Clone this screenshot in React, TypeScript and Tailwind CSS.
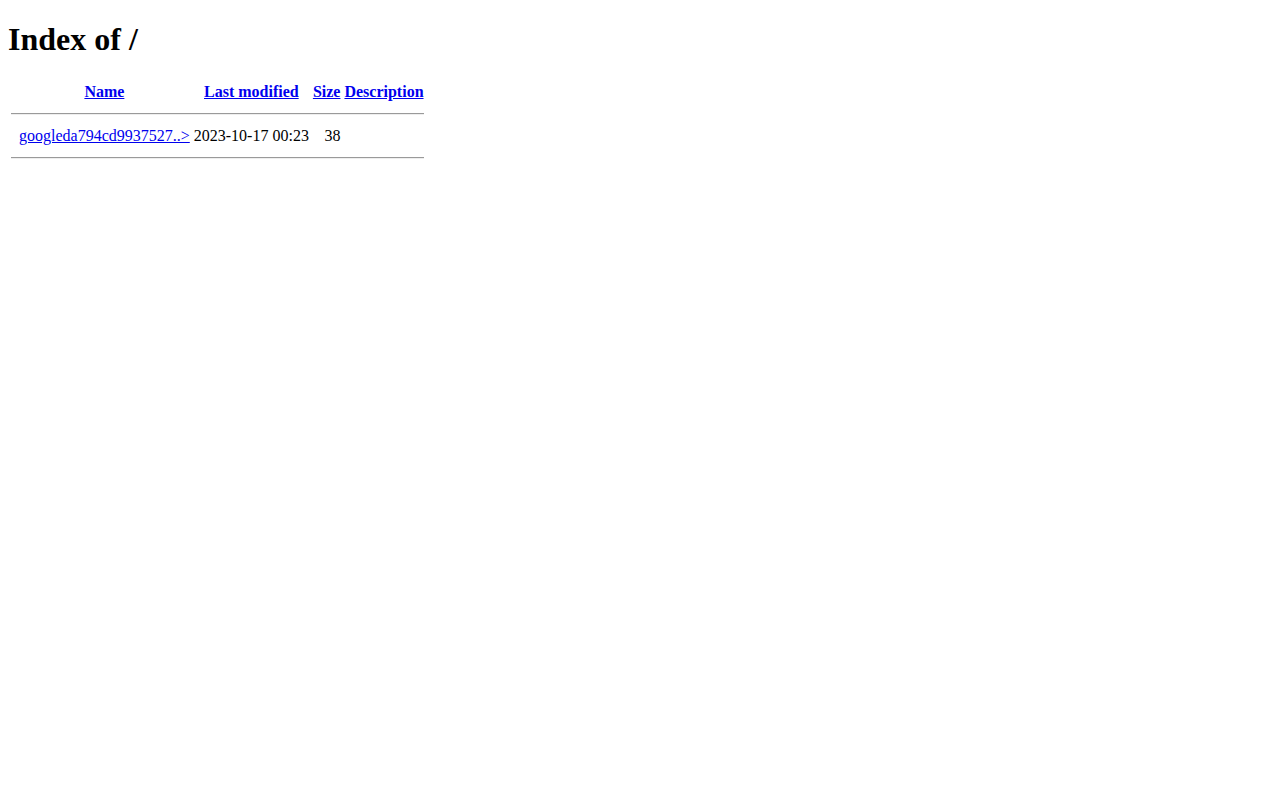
export default function App() {
  const serif = { fontFamily: '"Liberation Serif", "Times New Roman", serif' };
  const hr = (
    <tr>
      <th colSpan={5} className="p-px">
        <hr className="my-2 h-0 border-0 border-t border-b border-t-[#9a9a9a] border-b-[#eeeeee]" />
      </th>
    </tr>
  );
  return (
    <div className="m-2 text-[16px] text-black bg-white leading-normal" style={serif}>
      <h1 className="text-[32px] font-bold my-[21.44px] leading-[normal]">Index of /</h1>
      <table className="border-separate border-spacing-[2px] leading-[normal]">
        <tbody>
          <tr>
            <th className="p-px align-top"><span className="inline-block w-[4px]"></span></th>
            <th className="p-px font-bold text-center"><a href="#" className="text-[#0000ee] underline">Name</a></th>
            <th className="p-px font-bold text-center"><a href="#" className="text-[#0000ee] underline">Last modified</a></th>
            <th className="p-px font-bold text-center"><a href="#" className="text-[#0000ee] underline">Size</a></th>
            <th className="p-px font-bold text-center"><a href="#" className="text-[#0000ee] underline">Description</a></th>
          </tr>
          {hr}
          <tr>
            <td className="p-px align-top"><span className="inline-block w-[4px]"></span></td>
            <td className="p-px"><a href="#" className="text-[#0000ee] underline">googleda794cd9937527..&gt;</a></td>
            <td className="p-px text-right">2023-10-17 00:23</td>
            <td className="p-px text-right">38</td>
            <td className="p-px">&nbsp;</td>
          </tr>
          {hr}
        </tbody>
      </table>
    </div>
  );
}
